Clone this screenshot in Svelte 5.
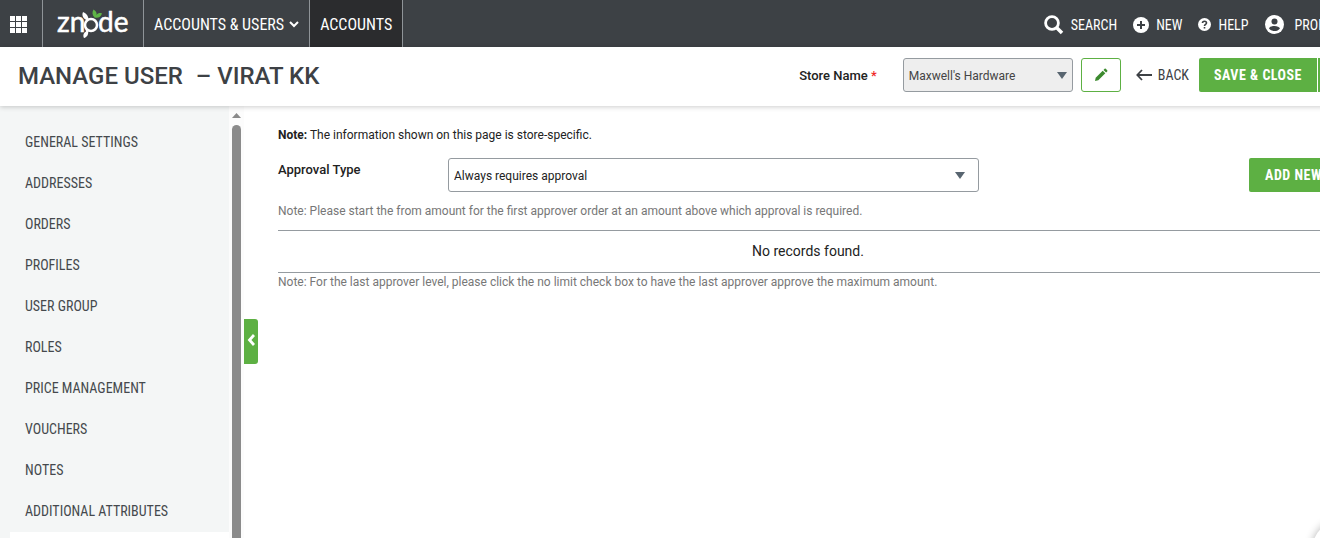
<script>
  const navItems = [
    'General Settings',
    'Addresses',
    'Orders',
    'Profiles',
    'User Group',
    'Roles',
    'Price Management',
    'Vouchers',
    'Notes',
    'Additional Attributes'
  ];

  let store = $state("Maxwell's Hardware");
  let approvalType = $state('Always requires approval');
  let collapsed = $state(false);
</script>

<div class="page">
  <header class="topbar">
    <button class="apps" aria-label="Applications">
      <svg width="17" height="17" viewBox="0 0 17 17" fill="#fff">
        {#each [0, 6, 12] as y}
          {#each [0, 6, 12] as x}
            <rect {x} {y} width="5" height="5" />
          {/each}
        {/each}
      </svg>
    </button>
    <a class="logo" href="#home" aria-label="znode">
      <svg width="80" height="44" viewBox="0 -5 80 44">
        <g fill="#fff" stroke="#fff" stroke-width="0.5" font-family="Lato, sans-serif" font-size="28">
          <text x="1" y="26">zn</text>
          <text x="42" y="26">de</text>
        </g>
        <circle cx="35" cy="19" r="6" fill="none" stroke="#fff" stroke-width="2.5" />
        <path d="M31.500 14.500C27 13 25.500 9.500 27 6 30.500 7.500 32.500 10 32.500 14z" fill="#fff" />
        <path d="M29 20l3 4.500C33 28 31 31.500 28 32 26.500 29 28 26.500 30 25.500z" fill="#fff" />
        <path d="M38.500 11.500C36 9 36 6 37.500 3.500 40 5 41 7 40.500 9 42 7 44 6.500 46 7.500 45 11 42 12.500 38.500 11.500z" fill="#5fb446" />
      </svg>
    </a>
    <a class="tab" href="#users">
      ACCOUNTS &amp; USERS
      <svg width="10" height="7" viewBox="0 0 10 7" fill="none" stroke="#fff" stroke-width="2">
        <path d="M1 1l4 4 4-4" />
      </svg>
    </a>
    <a class="tab active" href="#accounts">ACCOUNTS</a>

    <nav class="tools">
      <a class="search" href="#search">
        <svg width="20" height="20" viewBox="0 0 20 20" fill="none" stroke="#fff">
          <circle cx="8" cy="8" r="6.4" stroke-width="2.8" />
          <path d="M12.5 12.5l5.5 5.5" stroke-width="3.6" />
        </svg>
        SEARCH
      </a>
      <a class="new" href="#new">
        <svg width="16" height="16" viewBox="0 0 16 16">
          <circle cx="8" cy="8" r="8" fill="#fff" />
          <path d="M8 4v8M4 8h8" stroke="#3d4145" stroke-width="2" />
        </svg>
        NEW
      </a>
      <a class="help" href="#help">
        <svg width="13" height="13" viewBox="0 0 13 13">
          <circle cx="6.5" cy="6.5" r="6.5" fill="#fff" />
          <path d="M4.5 5c0-2.4 4-2.4 4 0 0 1.3-2 1.3-2 2.9M6.5 9v1.6" fill="none" stroke="#3d4145" stroke-width="1.6" />
        </svg>
        HELP
      </a>
      <a class="profile" href="#profile">
        <svg width="19" height="19" viewBox="0 0 19 19">
          <circle cx="9.5" cy="9.5" r="9.5" fill="#fff" />
          <circle cx="9.5" cy="6.6" r="3" fill="#3d4145" />
          <path d="M4 13.5c1-3.4 10-3.4 11 0-2.4 3.4-8.600 3.400-11 0z" fill="#3d4145" />
        </svg>
        PROFILE
      </a>
    </nav>
  </header>

  <div class="titlebar">
    <h1>MANAGE USER <span>– VIRAT KK</span></h1>
    <label class="store-label" for="store">Store Name <span>*</span></label>
    <div class="select store">
      <select id="store" bind:value={store}>
        <option>Maxwell's Hardware</option>
      </select>
      <svg class="caret" width="10" height="7" viewBox="0 0 10 7"><path d="M0 0h10L5 7z" fill="#586570" /></svg>
    </div>
    <button class="edit" aria-label="Edit store">
      <svg width="14" height="14" viewBox="0 0 14 14" fill="#3c8a2e">
        <path d="M1 13l.7-3.300L8.700 2.700l2.600 2.600-7 7z" />
        <path d="M9.500 1.900l1.100-1.100q.6-.5 1.200 0l1.400 1.400q.5.600 0 1.200l-1.100 1.100z" />
      </svg>
    </button>
    <a class="back" href="#back">
      <svg width="16" height="12" viewBox="0 0 16 12" fill="none" stroke="#3d4145" stroke-width="1.800">
        <path d="M16 6H1.500M6 1L1.300 6 6 11" />
      </svg>
      BACK
    </a>
    <button class="primary save">SAVE &amp; CLOSE</button>
    <button class="primary more" aria-label="More save options"></button>
  </div>

  <div class="body">
    <aside>
      {#if !collapsed}
        <nav class="side">
          {#each navItems as item}
            <a href="#{item}">{item}</a>
          {/each}
          <div class="current"></div>
        </nav>
        <div class="scroll">
          <svg width="9" height="5" viewBox="0 0 9 5"><path d="M0 5h9L4.500 0z" fill="#8a8a8a" /></svg>
          <div class="thumb"></div>
        </div>
      {/if}
      <button class="toggle" aria-label="Toggle menu" onclick={() => (collapsed = !collapsed)}>
        <svg width="8" height="12" viewBox="0 0 8 12" fill="none" stroke="#fff" stroke-width="2.800">
          <path d="M7 1L2.500 6 7 11" />
        </svg>
      </button>
    </aside>

    <main>
      <p class="info"><b>Note:</b> The information shown on this page is store-specific.</p>
      <div class="row">
        <label for="approval">Approval Type</label>
        <div class="select approval">
          <select id="approval" bind:value={approvalType}>
            <option>Always requires approval</option>
          </select>
          <svg class="caret" width="10" height="7" viewBox="0 0 10 7"><path d="M0 0h10L5 7z" fill="#586570" /></svg>
        </div>
        <button class="primary add">ADD NEW</button>
      </div>
      <p class="hint">Note: Please start the from amount for the first approver order at an amount above which approval is required.</p>
      <div class="empty">No records found.</div>
      <p class="hint last">Note: For the last approver level, please click the no limit check box to have the last approver approve the maximum amount.</p>
    </main>
  </div>

  <div class="bubble"></div>
</div>

<style>
  :global(body) {
    margin: 0;
    overflow: hidden;
    background: #fff;
  }

  /* The layout runs a little wider than the window */
  .page {
    width: calc(100% + 39px);
    height: 100vh;
    display: flex;
    flex-direction: column;
    font-family: Roboto, sans-serif;
    font-size: 12px;
    color: #222;
  }

  * {
    box-sizing: border-box;
  }

  svg {
    flex: none;
    display: block;
  }

  a {
    color: inherit;
    text-decoration: none;
  }

  button {
    padding: 0;
    border: 0;
    background: none;
    cursor: pointer;
  }

  p {
    margin: 0;
  }

  .topbar,
  .back,
  .primary,
  .side {
    font-family: 'Roboto Condensed', Roboto, sans-serif;
  }

  .topbar {
    flex: none;
    display: flex;
    height: 47px;
    background: #3d4145;
    color: #fff;
  }

  .apps,
  .logo,
  .tab {
    display: flex;
    align-items: center;
    border-right: 1px solid #8f9498;
  }

  .apps {
    width: 43px;
    padding: 2px 0 0 10px;
  }

  .logo {
    width: 101px;
    padding: 0 0 2px 13px;
  }

  .tab {
    gap: 5px;
    padding: 2px 10px 0;
    font-size: 16px;
  }

  .tab.active {
    background: #2b2c2e;
  }

  .tools {
    display: flex;
    margin-left: auto;
    padding: 2px 17px 0 0;
    font-size: 14px;
  }

  .tools a {
    display: flex;
    align-items: center;
    gap: 7px;
    margin-left: 16px;
  }

  .tools .profile {
    gap: 11px;
  }

  .titlebar {
    flex: none;
    position: relative;
    z-index: 1;
    display: flex;
    align-items: center;
    height: 59px;
    padding: 0 21px 3px 18px;
    background: #fff;
    box-shadow: 0 1px 5px rgba(0, 0, 0, 0.2);
  }

  h1 {
    margin: 0 auto 0 0;
    padding-top: 2px;
    font-size: 24px;
    font-weight: 500;
    color: #3d4145;
  }

  h1 span {
    margin-left: 7px;
  }

  .store-label {
    margin-right: 26px;
    font-size: 13px;
    font-weight: 500;
  }

  .store-label span {
    color: #f02828;
  }

  .select {
    position: relative;
  }

  select {
    appearance: none;
    width: 100%;
    height: 34px;
    padding: 2px 5px 0;
    border: 1px solid #959ba0;
    border-radius: 3px;
    background: #fff;
    font: 12px Roboto, sans-serif;
    color: #222;
  }

  .caret {
    position: absolute;
    top: 14px;
    right: 14px;
    pointer-events: none;
  }

  .store {
    width: 170px;
  }

  .store select {
    background: #eee;
    color: #444;
  }

  .store .caret {
    right: 6px;
  }

  .edit {
    display: flex;
    align-items: center;
    justify-content: center;
    width: 40px;
    height: 34px;
    margin: 0 15px 0 8px;
    border: 1px solid #5db043;
    border-radius: 3px;
  }

  .back {
    display: flex;
    align-items: center;
    gap: 6px;
    margin-right: 10px;
    font-size: 14px;
    color: #3d4145;
  }

  .primary {
    height: 34px;
    padding-bottom: 1px;
    background: #5db043;
    color: #fff;
    font-size: 14px;
    font-weight: 700;
    letter-spacing: 0.5px;
  }

  .save {
    width: 118px;
    border-radius: 2px 0 0 2px;
  }

  .more {
    width: 20px;
    margin-left: 1px;
    border-radius: 0 2px 2px 0;
  }

  .body {
    flex: 1;
    min-height: 0;
    display: flex;
  }

  aside {
    flex: none;
    position: relative;
    display: flex;
  }

  .side {
    display: flex;
    flex-direction: column;
    width: 229px;
    padding-top: 16px;
    overflow: hidden;
    background: #f4f6f6;
    font-size: 14px;
    color: #45494d;
    text-transform: uppercase;
  }

  .side a {
    flex: none;
    padding-left: 25px;
    line-height: 41px;
  }

  .current {
    flex: 1;
    margin-left: 10px;
    background: #fff;
  }

  .scroll {
    display: flex;
    flex-direction: column;
    align-items: center;
    gap: 7px;
    width: 15px;
    padding-top: 7px;
    background: #fcfcfc;
  }

  .thumb {
    flex: 1;
    width: 9px;
    border-radius: 5px 5px 0 0;
    background: #8b8b8b;
  }

  .toggle {
    position: absolute;
    top: 213px;
    left: 100%;
    display: flex;
    align-items: center;
    justify-content: center;
    width: 14px;
    height: 45px;
    padding-bottom: 4px;
    border-radius: 0 3px 3px 0;
    background: #5db043;
  }

  main {
    flex: 1;
    padding: 21px 21px 0 34px;
  }

  .info {
    line-height: 16px;
    margin-bottom: 15px;
  }

  .row {
    display: flex;
  }

  .row label {
    width: 170px;
    padding-top: 4px;
    font-size: 13px;
    font-weight: 500;
  }

  .approval {
    flex: 0 1 531px;
  }

  .add {
    width: 89px;
    margin-left: auto;
    border-radius: 2px;
  }

  .hint {
    margin: 11px 0;
    line-height: 16px;
    color: #777;
  }

  .hint.last {
    margin: 1px 0;
  }

  .empty {
    border: solid #959ba0;
    border-width: 1px 0;
    font-size: 14px;
    line-height: 41px;
    text-align: center;
  }

  .bubble {
    position: fixed;
    right: -52px;
    bottom: -42px;
    width: 60px;
    height: 60px;
    border-radius: 50%;
    background: #fff;
    box-shadow: 0 0 8px rgba(0, 0, 0, 0.3);
  }
</style>
